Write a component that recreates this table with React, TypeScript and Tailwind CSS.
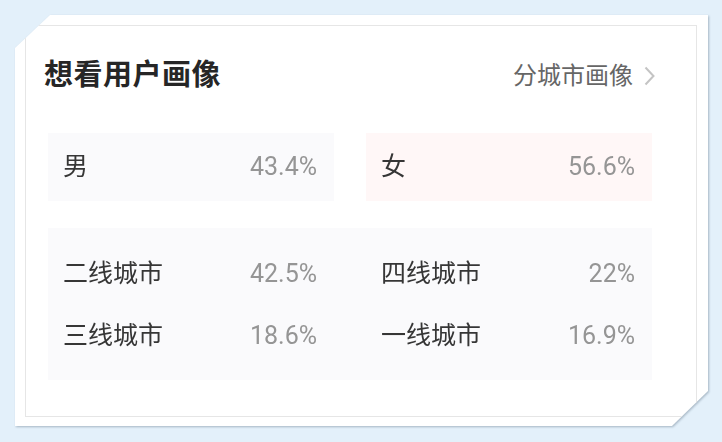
import React from 'react';

interface Stat {
  label: string;
  value: string;
}

const gender: (Stat & { tone: string })[] = [
  { label: '男', value: '43.4%', tone: 'bg-[#fafafc]' },
  { label: '女', value: '56.6%', tone: 'bg-[#fff7f7]' },
];

const cities: Stat[][] = [
  [
    { label: '二线城市', value: '42.5%' },
    { label: '三线城市', value: '18.6%' },
  ],
  [
    { label: '四线城市', value: '22%' },
    { label: '一线城市', value: '16.9%' },
  ],
];

const font = "font-['Roboto','Noto_Sans_CJK_SC',sans-serif]";

const StatLine: React.FC<{ stat: Stat; className?: string }> = ({ stat, className = '' }) => (
  <div className={`flex items-center justify-between ${className}`}>
    <span className="text-[25px] text-[#363636]">{stat.label}</span>
    <span className="text-[25px] text-[#959595]">{stat.value}</span>
  </div>
);

const App: React.FC = () => {
  return (
    <div className={`w-[722px] h-[442px] bg-[#e3f0fa] pt-[15px] pl-[15px] ${font}`}>
      {/* Card with folded corners */}
      <div className="w-[693px] h-[411px] [filter:drop-shadow(1px_1px_1px_rgba(90,110,130,0.45))]">
        <div className="w-full h-full bg-white p-[10px] [clip-path:polygon(35px_0,100%_0,100%_calc(100%-35px),calc(100%-36px)_100%,0_100%,0_33px)]">
          <div className="w-[672px] h-[392px] border border-[#e6e6e6] pl-[22px] pr-[44px]">
            {/* Header */}
            <div className="flex items-center justify-between h-[99px]">
              <h2 className="-ml-[4px] text-[29px] font-bold text-[#262626] tracking-[0.5px]">想看用户画像</h2>
              <div className="flex items-center gap-[11px] mr-[-3px]">
                <span className="text-[24px] text-[#666]">分城市画像</span>
                <svg width="11" height="20" viewBox="0 0 11 20" fill="none">
                  <path d="M1.5 1.5 L9.5 10 L1.5 18.5" stroke="#c4c4c4" strokeWidth="2" />
                </svg>
              </div>
            </div>

            {/* Gender */}
            <div className="grid grid-cols-2 gap-[32px] mt-[8px]">
              {gender.map((g) => (
                <div key={g.label} className={`h-[68px] pl-[15px] pr-[17px] flex items-center ${g.tone}`}>
                  <StatLine stat={g} className="w-full" />
                </div>
              ))}
            </div>

            {/* Cities */}
            <div className="mt-[27px] h-[152px] bg-[#fafafc] grid grid-cols-2 gap-[32px] pt-[15px]">
              {cities.map((col, i) => (
                <div key={i} className="pl-[15px] pr-[17px]">
                  {col.map((c) => (
                    <StatLine key={c.label} stat={c} className="h-[62px]" />
                  ))}
                </div>
              ))}
            </div>
          </div>
        </div>
      </div>
    </div>
  );
};

export default App;
